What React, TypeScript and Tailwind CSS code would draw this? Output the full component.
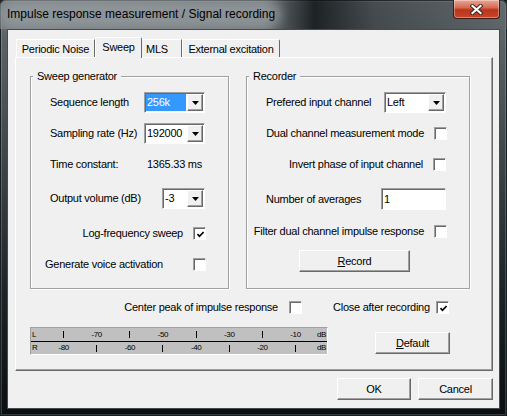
import React from "react";

const raised =
  "border border-t-white border-l-white border-r-[#696969] border-b-[#696969] shadow-[inset_-1px_-1px_0_#a0a0a0]";
const sunken =
  "border border-t-[#a0a0a0] border-l-[#a0a0a0] border-r-white border-b-white shadow-[inset_1px_1px_0_#696969]";

function Check({ checked }: { checked?: boolean }) {
  return (
    <span className={`flex h-[13px] w-[13px] shrink-0 items-center justify-center bg-white ${sunken}`}>
      {checked && (
        <svg width="9" height="9" viewBox="0 0 9 9" className="ml-px mt-px">
          <path d="M1.5 4.2 L3.5 6.3 L7.6 2" fill="none" stroke="#000" strokeWidth="1.7" />
        </svg>
      )}
    </span>
  );
}

function DropBtn() {
  return (
    <span className={`flex w-[16px] shrink-0 items-center justify-center bg-[#f0f0f0] ${raised}`}>
      <svg width="7" height="4" viewBox="0 0 7 4">
        <path d="M0 0 H7 L3.5 4 Z" fill="#000" />
      </svg>
    </span>
  );
}

function Combo({ value, className, selected }: { value: string; className: string; selected?: boolean }) {
  return (
    <div className={`flex h-[21px] shrink-0 bg-white p-[1px] ${sunken} ${className}`}>
      <div className="mr-px flex flex-1 items-stretch">
        {selected ? (
          <span className="flex flex-1 items-center bg-[#3399ff] pl-px text-white">{value}</span>
        ) : (
          <span className="flex flex-1 items-center pl-px">{value}</span>
        )}
      </div>
      <DropBtn />
    </div>
  );
}

function Btn({ children, className }: { children: React.ReactNode; className: string }) {
  return (
    <button type="button" className={`flex h-[22px] items-center justify-center bg-[#f0f0f0] ${raised} ${className}`}>
      {children}
    </button>
  );
}

function Group({ title, className, children }: { title: string; className: string; children: React.ReactNode }) {
  return (
    <div
      className={`flex flex-col border border-[#a0a0a0] shadow-[inset_1px_1px_0_#fff,1px_1px_0_#fff] ${className}`}
    >
      <span className="-mt-[7px] ml-[2px] self-start bg-[#f0f0f0] px-[4px] leading-[13px]">{title}</span>
      {children}
    </div>
  );
}

const left = ["|", "-70", "|", "-50", "|", "-30", "|", "-10"];
const right = ["-80", "|", "-60", "|", "-40", "|", "-20", "|"];

function MeterRow({ ch, items, className }: { ch: string; items: string[]; className: string }) {
  return (
    <div className={`flex items-center ${className}`}>
      <span className="w-[16px] pl-[1px]">{ch}</span>
      {items.map((t, i) => (
        <span key={i} className="flex w-[33.15px] justify-center">
          {t === "|" ? <span className="h-[7px] w-px bg-black" /> : t}
        </span>
      ))}
      <span className="flex-1 pr-[1px] text-right">dB</span>
    </div>
  );
}

function Meter() {
  return (
    <div className="flex h-[28px] w-[298px] flex-col border border-t-[#a0a0a0] border-l-[#a0a0a0] border-r-white border-b-white bg-[#c0c0c0] text-[8px] leading-none tracking-[-0.4px] text-black">
      <MeterRow ch="L" items={left} className="h-[14px] border-b border-black" />
      <MeterRow ch="R" items={right} className="h-[12px]" />
    </div>
  );
}

export default function App() {
  return (
    <div className="h-[416px] w-[507px] overflow-hidden bg-[#1b1f21] font-['Liberation_Sans',Arial,sans-serif]">
      <div className="flex h-[416px] w-[507px] flex-col rounded-t-[6px] bg-[linear-gradient(180deg,#656c70_0%,#474e52_30%,#1d2326_70%,#0b0f11_100%)] shadow-[inset_0_0_0_1px_#1a1f22,inset_0_0_0_2px_rgba(255,255,255,0.18)]">
        {/* title bar */}
        <div className="flex h-[29px] items-start rounded-t-[6px] bg-[linear-gradient(90deg,rgba(135,142,145,0.6)_0%,rgba(125,132,135,0.5)_52%,rgba(18,22,24,0.85)_62%,rgba(40,46,49,0.5)_74%,rgba(95,103,106,0.35)_100%)] pl-[7px] pr-[7px]">
          <span className="self-center rounded-[10px] bg-[rgba(165,171,174,0.5)] text-[12px] leading-[15px] text-black shadow-[0_0_10px_7px_rgba(165,171,174,0.5)]">
            Impulse response measurement / Signal recording
          </span>
          <div className="ml-auto flex h-[19px] w-[47px] items-center justify-center rounded-b-[4px] border border-t-0 border-[#3b1e18] bg-[linear-gradient(180deg,#e9a796_0%,#d66a52_42%,#b9341b_55%,#c8462b_100%)] shadow-[inset_0_0_0_1px_rgba(255,255,255,0.35)]">
            <svg width="13" height="11" viewBox="0 0 13 11">
              <path d="M2.5 2 L10.5 9 M10.5 2 L2.5 9" stroke="#3a2420" strokeWidth="4" strokeLinecap="square" />
              <path d="M2.5 2 L10.5 9 M10.5 2 L2.5 9" stroke="#fff" strokeWidth="2.2" strokeLinecap="square" />
            </svg>
          </div>
        </div>

        {/* client area */}
        <div className="mx-[7px] flex h-[380px] flex-col border border-[#454c50] bg-[#f0f0f0] text-[11px] tracking-[-0.25px] text-black">
          {/* tabs */}
          <div className="ml-[7px] mt-[7px] flex h-[20px] items-end pl-[1px]">
            <div className="flex h-[18px] w-[79px] items-center justify-center rounded-tl-[2px] border-l border-t border-r border-l-white border-t-white border-r-[#696969] pt-[1px]">
              Periodic Noise
            </div>
            <div className="relative z-10 -mb-px flex h-[21px] w-[47px] items-center justify-center rounded-t-[2px] border-l border-t border-r border-l-white border-t-white border-r-[#696969] bg-[#f0f0f0] pb-[1px]">
              Sweep
            </div>
            <div className="flex h-[18px] w-[40px] items-center border-t border-r border-t-white border-r-[#696969] pl-[4px] pt-[1px]">
              MLS
            </div>
            <div className="flex h-[18px] w-[98px] items-center justify-center rounded-tr-[2px] border-l border-t border-r border-l-white border-t-white border-r-[#696969] pt-[1px]">
              External excitation
            </div>
          </div>

          {/* tab panel */}
          <div className={`ml-[7px] flex h-[314px] w-[478px] flex-col ${raised}`}>
            <div className="ml-[14px] mt-[18px] flex">
              <Group title="Sweep generator" className="h-[213px] w-[199px]">
                <div className="mt-[9px] flex h-[21px] items-center pl-[19px]">
                  <span className="w-[94px]">Sequence length</span>
                  <Combo value="256k" selected className="w-[61px]" />
                </div>
                <div className="mt-[10px] flex h-[21px] items-center pl-[19px]">
                  <span className="w-[94px]">Sampling rate (Hz)</span>
                  <Combo value="192000" className="w-[61px]" />
                </div>
                <div className="mt-[10px] flex h-[21px] items-center pl-[19px]">
                  <span className="w-[97px]">Time constant:</span>
                  <span>1365.33 ms</span>
                </div>
                <div className="mt-[13px] flex h-[21px] items-center pl-[19px]">
                  <span className="w-[112px]">Output volume (dB)</span>
                  <Combo value="-3" className="w-[43px]" />
                </div>
                <div className="mt-[14px] flex h-[21px] items-center justify-end gap-[10px] pr-[22px]">
                  <span>Log-frequency sweep</span>
                  <Check checked />
                </div>
                <div className="mt-[10px] flex h-[21px] items-center justify-between pl-[14px] pr-[22px]">
                  <span>Generate voice activation</span>
                  <Check />
                </div>
              </Group>

              <Group title="Recorder" className="ml-[17px] h-[213px] w-[224px]">
                <div className="mt-[9px] flex h-[21px] items-center pl-[19px]">
                  <span className="w-[118px]">Prefered input channel</span>
                  <Combo value="Left" className="w-[62px]" />
                </div>
                <div className="mt-[10px] flex h-[21px] items-center justify-end gap-[10px] pr-[22px]">
                  <span>Dual channel measurement mode</span>
                  <Check />
                </div>
                <div className="mt-[10px] flex h-[21px] items-center justify-end gap-[10px] pr-[23px]">
                  <span>Invert phase of input channel</span>
                  <Check />
                </div>
                <div className="mt-[13px] flex h-[22px] items-center pl-[19px]">
                  <span className="w-[115px]">Number of averages</span>
                  <div className={`flex h-[22px] w-[65px] items-center bg-white pl-[2px] ${sunken}`}>1</div>
                </div>
                <div className="mt-[11px] flex h-[21px] items-center justify-end gap-[10px] pr-[22px]">
                  <span>Filter dual channel impulse response</span>
                  <Check />
                </div>
                <Btn className="ml-[52px] mt-[8px] w-[111px]">
                  <span className="underline">R</span>ecord
                </Btn>
              </Group>
            </div>

            <div className="ml-[108px] mt-[12px] flex h-[13px] items-center">
              <div className="flex w-[178px] items-center justify-end gap-[11px]">
                <span>Center peak of impulse response</span>
                <Check />
              </div>
              <div className="ml-[31px] flex w-[116px] items-center justify-between">
                <span>Close after recording</span>
                <Check checked />
              </div>
            </div>

            <div className="ml-[14px] mt-[13px] flex items-start">
              <Meter />
              <Btn className="ml-[47px] mt-[5px] w-[75px]">
                <span className="underline">D</span>efault
              </Btn>
            </div>
          </div>

          {/* dialog buttons */}
          <div className="mt-[7px] flex justify-end gap-[7px] pr-[6px]">
            <Btn className="w-[74px]">OK</Btn>
            <Btn className="w-[75px]">Cancel</Btn>
          </div>
        </div>
      </div>
    </div>
  );
}
